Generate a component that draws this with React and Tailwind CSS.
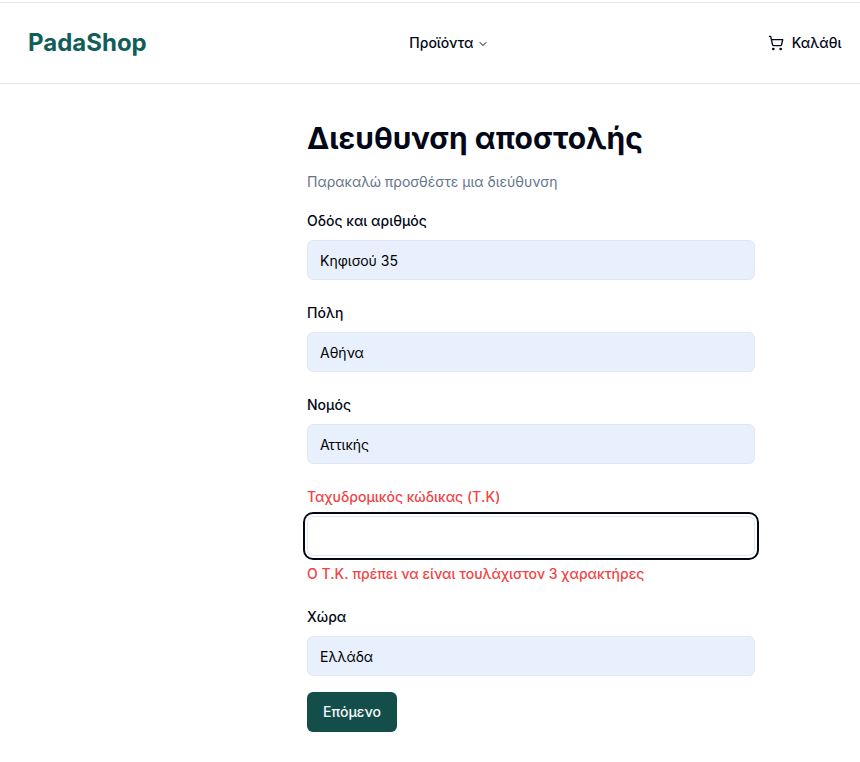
import { ChevronDown, ShoppingCart } from "lucide-react";

function Field({ label, value, error }) {
  return (
    <div className="flex flex-col">
      <label className={`text-sm leading-[14px] font-medium ${error ? "text-[#ef4444]" : "text-[#020817]"}`}>{label}</label>
      <input
        readOnly
        defaultValue={value}
        className={`mt-3 h-10 w-full rounded-md border border-[#e2e8f0] px-3 py-2 text-sm text-black outline-none ${error ? "bg-white ring-2 ring-[#020817] ring-offset-2 ring-offset-white" : "bg-[#e8f0fe]"}`}
      />
      {error && <p className="mt-2 text-sm font-medium text-[#ef4444]">{error}</p>}
    </div>
  );
}

export default function App() {
  return (
    <div className="h-[762px] overflow-hidden bg-white font-['Inter',sans-serif] text-[#020817]">
      <header className="flex h-[84px] items-center justify-between border-b border-[#e5e7eb] pr-[18.5px] pl-7 shadow-[inset_0_2px_0_#fff,inset_0_3px_0_#e5e7eb]">
        <div className="w-[381.3px] pt-[3px] text-2xl font-bold text-[#115e59]">PadaShop</div>
        <nav className="flex flex-1 items-center pt-[3px] text-sm font-medium">
          Προϊόντα
          <ChevronDown strokeWidth={2} className="mt-0.5 ml-[3px] h-3 w-3" />
        </nav>
        <div className="flex items-center gap-2 pt-[3px] text-sm font-medium">
          <ShoppingCart className="h-4 w-4" />
          Καλάθι
        </div>
      </header>
      <main className="ml-[307px] w-[448px] pt-9">
        <h1 className="text-3xl font-bold">Διευθυνση αποστολής</h1>
        <p className="mt-4 text-sm text-[#64748b]">Παρακαλώ προσθέστε μια διεύθυνση</p>
        <form className="mt-[22px] flex flex-col gap-[26px]">
          <Field label="Οδός και αριθμός" value="Κηφισού 35" />
          <Field label="Πόλη" value="Αθήνα" />
          <Field label="Νομός" value="Αττικής" />
          <Field
            label={<>Ταχυδρομικός κώδικας (<span className="tracking-[0.2px]">Τ.Κ</span>)</>}
            value=""
            error={<>Ο <span className="tracking-[0.1px]">Τ.Κ.</span> πρέπει να είναι τουλάχιστον 3 χαρακτήρες</>}
          />
          <Field label="Χώρα" value="Ελλάδα" />
        </form>
        <button className="mt-4 h-10 w-[90px] rounded-md bg-[#134e4a] text-sm font-medium text-[#f8fafc]">Επόμενο</button>
      </main>
    </div>
  );
}
